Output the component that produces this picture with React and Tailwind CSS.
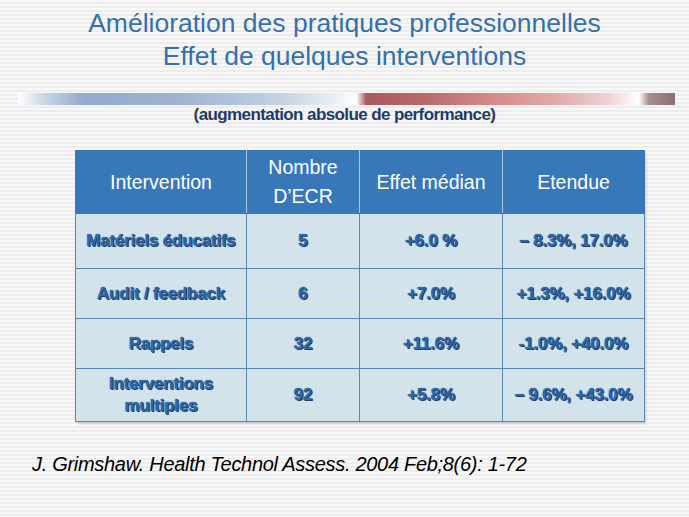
const rows = [
  { name: "Matériels éducatifs", n: "5", effet: "+6.0 %", range: "– 8.3%, 17.0%", h: "h-[55px]" },
  { name: "Audit / feedback", n: "6", effet: "+7.0%", range: "+1.3%, +16.0%", h: "h-[50px]" },
  { name: "Rappels", n: "32", effet: "+11.6%", range: "-1.0%, +40.0%", h: "h-[50px]" },
  { name: "Interventions multiples", n: "92", effet: "+5.8%", range: "– 9.6%, +43.0%", h: "h-[53px]" },
]

const cell = "border border-[#5a86b4] text-center align-middle px-1"
const bodyText = "text-[17px] font-bold leading-[22px] tracking-[-0.2px] text-[#3168a8] [text-shadow:1px_1px_0_#1d3d66,0_0_1px_#1d3d66]"

const App = () => {
  return (
    <div
      className="w-[689px] h-[517px] overflow-hidden bg-[repeating-linear-gradient(to_bottom,#f8f8f8_0px,#f8f8f8_2px,#ededed_2px,#ededed_4px)]"
      style={{ fontFamily: '"Liberation Sans", Arial, sans-serif' }}
    >
      <div className="pt-[7px] text-center text-[#3470aa] text-[26.5px] leading-[33px]">
        <div>Amélioration des pratiques professionnelles</div>
        <div>Effet de quelques interventions</div>
      </div>

      <div className="mt-[20px] ml-[18px] w-[657px] h-[12px] bg-[linear-gradient(to_right,#ffffff_0%,#c9d6e6_4%,#93a9cd_10%,#9fb4d3_25%,#c3d2e2_40%,#e9eef4_48%,#ffffff_51.5%,#a85a5e_53%,#b86a6c_62%,#d48a8a_72%,#e2aaaa_82%,#efd2d2_90%,#ffffff_94.5%,#a68e8c_96%,#8a7070_100%)]" />

      <div className="mt-[0px] text-center text-[17px] font-bold leading-[19px] tracking-[-0.6px] text-[#1f3b66]">
        (augmentation absolue de performance)
      </div>

      <div className="ml-[75px] mt-[26px] w-[569px] shadow-[2px_2px_2px_rgba(0,0,0,0.15)]">
        <table className="w-[569px] border-collapse table-fixed">
          <colgroup>
            <col className="w-[171px]" />
            <col className="w-[113px]" />
            <col className="w-[143px]" />
            <col className="w-[142px]" />
          </colgroup>
          <thead>
            <tr className="h-[63px] bg-[#3878b8] text-white text-[19.5px] leading-[29px] font-normal">
              <th className="border border-[#3878b8] border-r-[#a9c6e2] font-normal text-center">Intervention</th>
              <th className="border border-[#3878b8] border-r-[#a9c6e2] font-normal text-center">
                Nombre
                <br />
                D’ECR
              </th>
              <th className="border border-[#3878b8] border-r-[#a9c6e2] font-normal text-center">Effet médian</th>
              <th className="border border-[#3878b8] font-normal text-center">Etendue</th>
            </tr>
          </thead>
          <tbody className="bg-[#d3e3ec]">
            {rows.map((r) => (
              <tr key={r.name} className={r.h}>
                <td className={`${cell} ${bodyText}`}>{r.name}</td>
                <td className={`${cell} ${bodyText}`}>{r.n}</td>
                <td className={`${cell} ${bodyText}`}>{r.effet}</td>
                <td className={`${cell} ${bodyText}`}>{r.range}</td>
              </tr>
            ))}
          </tbody>
        </table>
      </div>

      <div className="mt-[27px] ml-[32px] text-[20px] italic tracking-[-0.3px] text-black">
        J. Grimshaw. Health Technol Assess. 2004 Feb;8(6): 1-72
      </div>
    </div>
  )
}

export default App
